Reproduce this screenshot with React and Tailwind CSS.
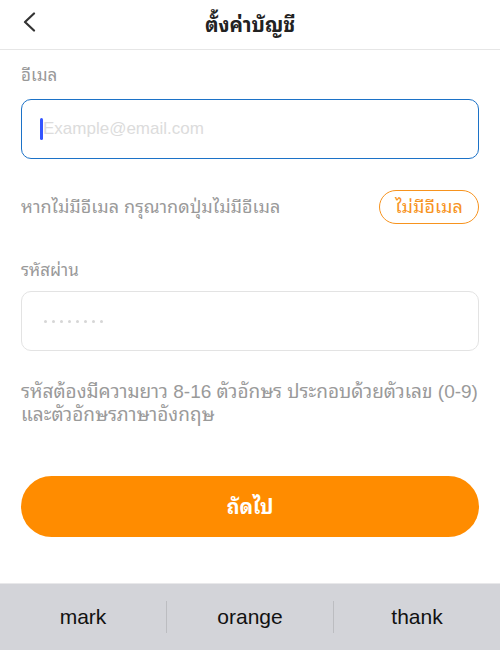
export default function App() {
  const font = { fontFamily: '"Liberation Sans", "Noto Sans Thai Looped", "Noto Sans Thai", sans-serif' };
  return (
    <div className="w-[500px] h-[650px] bg-white flex flex-col overflow-hidden" style={font}>
      <div className="h-[50px] relative flex items-center justify-center border-b border-[#e6e6e6] shrink-0">
        <svg className="absolute left-[22px] top-[12px]" width="16" height="20" viewBox="0 0 16 20" fill="none">
          <path d="M12 1.5 L3 10 L12 18.5" stroke="#333" strokeWidth="2.2" strokeLinecap="round" strokeLinejoin="round" />
        </svg>
        <span className="text-[20px] font-bold text-[#222] leading-none">ตั้งค่าบัญชี</span>
      </div>
      <div className="px-[21px] flex flex-col flex-1">
        <div className="mt-[14px] text-[17px] text-[#999] leading-[24px]">อีเมล</div>
        <div className="mt-[11px] h-[60px] border-[1.5px] border-[#1c72c7] rounded-[10px] flex items-center pl-[18px]">
          <div className="w-[3px] h-[22px] bg-[#3355ff] rounded-sm" />
          <span className="text-[17px] text-[#dcdcdc]">Example@email.com</span>
        </div>
        <div className="mt-[31px] flex items-center justify-between">
          <span className="text-[18px] text-[#9a9a9a]">หากไม่มีอีเมล กรุณากดปุ่มไม่มีอีเมล</span>
          <div className="w-[100px] h-[34px] border-[1.5px] border-[#f7931e] rounded-full flex items-center justify-center text-[18px] text-[#f7931e]">ไม่มีอีเมล</div>
        </div>
        <div className="mt-[35px] text-[17px] text-[#999] leading-[24px]">รหัสผ่าน</div>
        <div className="mt-[8px] h-[60px] border border-[#e3e3e3] rounded-[10px] flex items-center pl-[22px] gap-[5px]">
          {Array.from({ length: 8 }).map((_, i) => (
            <div key={i} className="w-[3px] h-[3px] rounded-full bg-[#d6d6d6]" />
          ))}
        </div>
        <div className="mt-[29px] text-[19px] text-[#9a9a9a] leading-[23px] whitespace-nowrap">
          รหัสต้องมีความยาว 8-16 ตัวอักษร ประกอบด้วยตัวเลข (0-9)<br />และตัวอักษรภาษาอังกฤษ
        </div>
        <div className="mt-[50px] h-[61px] bg-[#ff8c00] rounded-full flex items-center justify-center text-white text-[20px] font-bold">ถัดไป</div>
      </div>
      <div className="h-[67px] bg-[#d3d4d9] border-t border-[#e8e8ea] flex items-center shrink-0">
        <div className="flex-1 text-center text-[21px] text-[#111]">mark</div>
        <div className="w-px h-[32px] bg-[#bcbdc1]" />
        <div className="flex-1 text-center text-[21px] text-[#111]">orange</div>
        <div className="w-px h-[32px] bg-[#bcbdc1]" />
        <div className="flex-1 text-center text-[21px] text-[#111]">thank</div>
      </div>
    </div>
  );
}
